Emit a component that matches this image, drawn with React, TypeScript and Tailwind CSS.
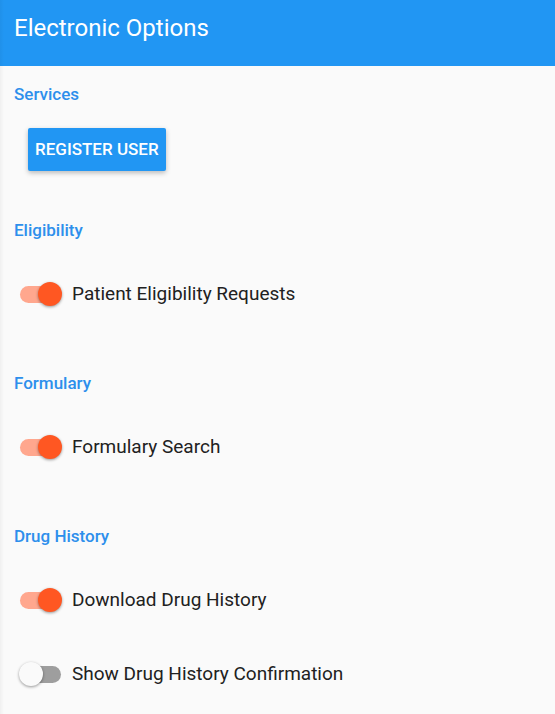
import { useId, useState } from 'react';

interface SwitchRowProps {
    label: string;
    initial: boolean;
}

function SwitchRow({ label, initial }: SwitchRowProps) {
    const id = useId();
    const [checked, setChecked] = useState(initial);

    return (
        <div className="flex items-center gap-2.5">
            <span className="relative flex h-6 w-[43px] shrink-0 items-center px-px">
                <input
                    id={id}
                    type="checkbox"
                    role="switch"
                    checked={checked}
                    onChange={(e) => setChecked(e.target.checked)}
                    className="peer h-[17px] w-full cursor-pointer appearance-none rounded-full bg-[#9e9e9e] transition-colors checked:bg-[#ffa78e]"
                />
                <span className="pointer-events-none absolute left-0 h-6 w-6 rounded-full bg-[#fafafa] shadow-[0_1px_3px_rgba(0,0,0,0.4)] transition-transform peer-checked:translate-x-[19px] peer-checked:bg-[#ff5722]" />
            </span>
            <label htmlFor={id} className="cursor-pointer text-[19px] leading-6 text-[#212121]">
                {label}
            </label>
        </div>
    );
}

function SectionTitle({ children }: { children: string }) {
    return <h2 className="px-3.5 text-[17px] leading-6 font-medium text-[#2d8fec]">{children}</h2>;
}

const sections = [
    { title: 'Eligibility', options: [{ label: 'Patient Eligibility Requests', on: true }] },
    { title: 'Formulary', options: [{ label: 'Formulary Search', on: true }] },
    {
        title: 'Drug History',
        options: [
            { label: 'Download Drug History', on: true },
            { label: 'Show Drug History Confirmation', on: false },
        ],
    },
];

export default function App() {
    return (
        <div className="relative min-h-screen bg-[#fafafa] font-[Roboto,sans-serif]">
            {/* soft shade along the left edge */}
            <div className="pointer-events-none absolute inset-y-0 left-0 w-1 bg-linear-to-r from-black/4 to-transparent" />
            <header className="bg-[#2196f3] px-3.5 pt-3 pb-[22px]">
                <h1 className="text-2xl leading-8 text-white">Electronic Options</h1>
            </header>
            <main className="flex flex-col gap-[47px] pt-4">
                <section>
                    <SectionTitle>Services</SectionTitle>
                    <button
                        type="button"
                        className="mt-[22px] ml-7 block h-[43px] cursor-pointer rounded-xs bg-[#2196f3] px-[7px] text-[17px] font-medium text-white uppercase shadow-[0_2px_5px_rgba(0,0,0,0.26)]"
                    >
                        Register User
                    </button>
                </section>
                {sections.map((section) => (
                    <section key={section.title}>
                        <SectionTitle>{section.title}</SectionTitle>
                        <div className="flex flex-col gap-[50px] px-[19px] pt-10 pb-[18px]">
                            {section.options.map((option) => (
                                <SwitchRow key={option.label} label={option.label} initial={option.on} />
                            ))}
                        </div>
                    </section>
                ))}
            </main>
        </div>
    );
}
